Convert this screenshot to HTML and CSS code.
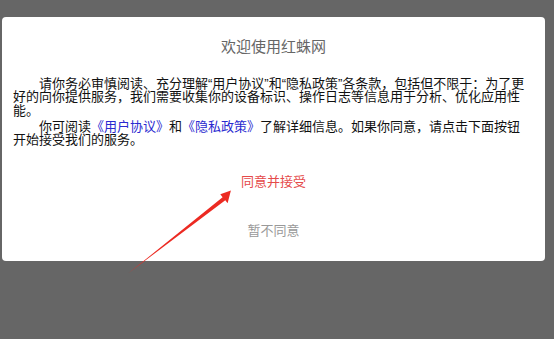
FILE: index.html
```html
<!DOCTYPE html>
<html lang="zh-CN">
<head>
<meta charset="utf-8">
<title>欢迎使用红蛛网</title>
<link rel="stylesheet" href="styles.css">
</head>
<body>
<div class="dialog">
  <h1 class="title">欢迎使用红蛛网</h1>
  <div class="content">
    <p class="para">请你务必审慎阅读、充分理解“用户协议”和“隐私政策”各条款，包括但不限于：为了更好的向你提供服务，我们需要收集你的设备标识、操作日志等信息用于分析、优化应用性能。</p>
    <p class="para">你可阅读<span class="link">《用户协议》</span>和<span class="link">《隐私政策》</span><span>了解详细信息。如果你同意，请点击下面按钮</span><span>开始接受我们的服务。</span></p>
  </div>
  <div class="actions">
    <div class="btn btn-agree">同意并接受</div>
    <div class="btn btn-refuse">暂不同意</div>
  </div>
</div>
<svg class="arrow" width="554" height="339" viewBox="0 0 554 339">
  <polygon points="128.3,273.3 222.6,197.3 220.3,194.2 230.9,190.5 227.6,203.2 225.3,200.2" fill="#ec2a22"/>
</svg>
</body>
</html>
```
FILE: styles.css
```css
html, body {
  margin: 0;
  padding: 0;
}
body {
  background: #666666;
  width: 554px;
  height: 339px;
  overflow: hidden;
  position: relative;
  font-family: "Liberation Sans", "Noto Sans CJK SC", sans-serif;
}
.dialog {
  margin: 17px 0 0 2px;
  width: 543px;
  box-sizing: border-box;
  background: #ffffff;
  border-radius: 4px;
  padding: 20px 0 6.5px 0;
  display: flex;
  flex-direction: column;
}
.title {
  margin: 0;
  font-size: 15px;
  line-height: 20px;
  font-weight: normal;
  color: #666666;
  text-align: center;
}
.content {
  margin-top: 19.5px;
  padding: 0 15px 0 11px;
  color: #111111;
  font-size: 13px;
  line-height: 13.5px;
  display: flex;
  flex-direction: column;
  gap: 2.5px;
}
.para {
  margin: 0;
  text-indent: 2em;
}
.link {
  color: #2a2ad0;
  display: inline-block;
  text-indent: 0;
  line-height: 13.5px;
  height: 13.5px;
  vertical-align: top;
}
.actions {
  margin-top: 10px;
  display: flex;
  flex-direction: column;
}
.btn {
  height: 49px;
  line-height: 49px;
  text-align: center;
  font-size: 13px;
}
.btn-agree {
  color: #e54a4a;
}
.btn-refuse {
  color: #999999;
}
.arrow {
  position: absolute;
  left: 0;
  top: 0;
  pointer-events: none;
}
```
